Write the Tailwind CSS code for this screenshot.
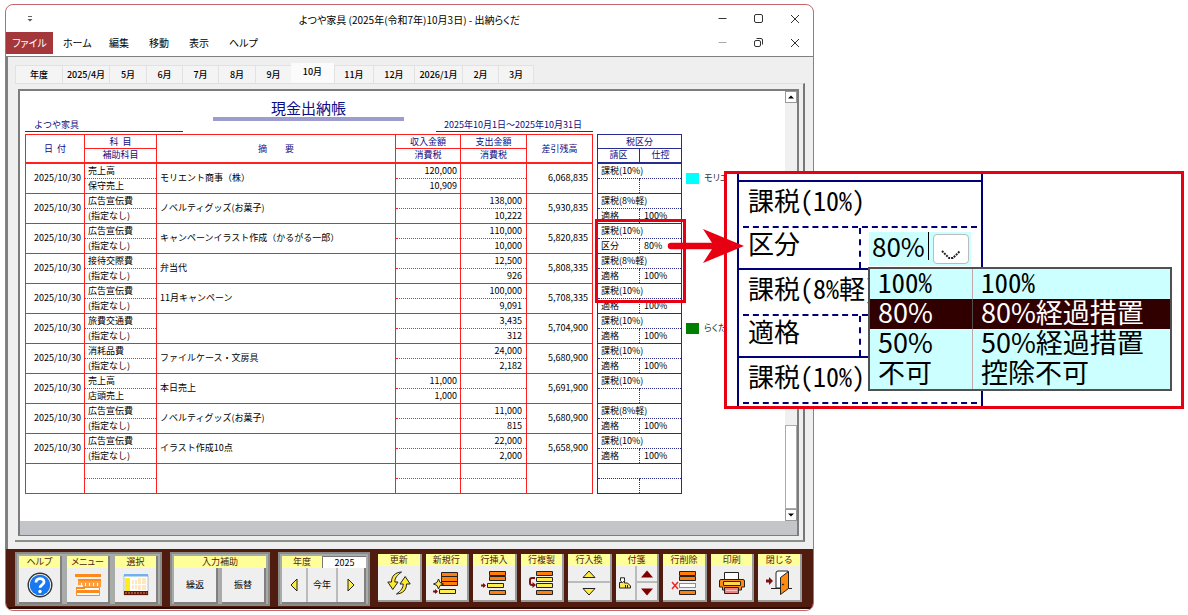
<!DOCTYPE html>
<html lang="ja">

<head>
	<meta charset="UTF-8">
	<meta name="viewport" content="width=device-width, initial-scale=1.0">
	<title>よつや家具 - 出納らくだ</title>
	<script src="https://cdn.jsdelivr.net/npm/@tailwindcss/browser@4"></script>
</head>

<body class="bg-white font-['Noto_Sans_CJK_JP',sans-serif] text-black">
	<main class="relative pl-[5px] pt-1">

		<!-- Application window -->
		<section class="flex w-full max-w-[809px] flex-col overflow-hidden rounded-lg border border-[#c4686c] bg-white">

			<!-- Title bar -->
			<header class="grid h-[27px] grid-cols-[1fr_auto_1fr] items-center">
				<svg class="ml-5 h-2 w-2" viewBox="0 0 8 8"><path d="M2 1.5h4" stroke="#666"/><path d="M1.5 4h5L4 6.500z" fill="#555"/></svg>
				<h1 class="pt-[3px] text-[10px] leading-4 [font-feature-settings:'palt']">よつや家具 (2025年(令和7年)10月3日) - 出納らくだ</h1>
				<div class="flex justify-end gap-5 pr-[10px]">
					<button aria-label="最小化" class="h-4 w-4"><svg viewBox="0 0 16 16" fill="none" stroke="#333"><path d="M3.500 7.500h8"/></svg></button>
					<button aria-label="最大化" class="h-4 w-4"><svg viewBox="0 0 16 16" fill="none" stroke="#333"><rect x="3.500" y="3.500" width="8" height="8" rx="1.500"/></svg></button>
					<button aria-label="閉じる" class="h-4 w-4"><svg viewBox="0 0 16 16" fill="none" stroke="#333"><path d="M4 4l8 8M12 4l-8 8"/></svg></button>
				</div>
			</header>

			<!-- Menu bar -->
			<nav class="flex h-6 items-start text-[10px] leading-[22px] [font-feature-settings:'palt']">
				<button class="h-[22px] w-[47px] bg-[#a4373a] text-white">ファイル</button>
				<button class="ml-[10px] w-[26px] whitespace-nowrap">ホーム</button>
				<button class="ml-5 w-5 whitespace-nowrap">編集</button>
				<button class="ml-5 w-5 whitespace-nowrap">移動</button>
				<button class="ml-5 w-5 whitespace-nowrap">表示</button>
				<button class="ml-5 w-[26px] whitespace-nowrap">ヘルプ</button>
				<div class="ml-auto flex gap-5 pr-[10px] pt-[3px]">
					<button aria-label="ブックを最小化" class="h-4 w-4"><svg viewBox="0 0 16 16" fill="none" stroke="#aaa"><path d="M3.500 7.500h8"/></svg></button>
					<button aria-label="元に戻す" class="h-4 w-4"><svg viewBox="0 0 16 16" fill="none" stroke="#333"><rect x="3.500" y="5.500" width="6" height="6" rx="1.500"/><path d="M5.500 3.500h4.500q1.500 0 1.500 1.500v4.500"/></svg></button>
					<button aria-label="ブックを閉じる" class="h-4 w-4"><svg viewBox="0 0 16 16" fill="none" stroke="#333"><path d="M4 4l8 8M12 4l-8 8"/></svg></button>
				</div>
			</nav>

			<!-- Client area -->
			<div class="flex h-[493px] flex-col border-l-2 border-t border-[#808080] bg-[#efefef] pl-[7px] pr-2 pt-[6px]">
				<div role="tablist" class="flex h-5 items-end text-[9px] font-medium leading-[18px] [&>button]:h-[18px] [&>button]:border-l [&>button]:border-t [&>button]:border-[#e2e2e2] [&>button]:bg-[#f4f4f4]">
					<button role="tab" class="w-[47px]">年度</button>
					<button role="tab" class="w-[47px] whitespace-nowrap">2025/4月</button>
					<button role="tab" class="w-[37px]">5月</button>
					<button role="tab" class="w-9">6月</button>
					<button role="tab" class="w-9">7月</button>
					<button role="tab" class="w-[37px]">8月</button>
					<button role="tab" class="w-9">9月</button>
					<span role="tab" aria-selected="true" class="h-5 w-[43px] bg-[#fbfbfb] text-center">10月</span>
					<button role="tab" class="w-[39px]">11月</button>
					<button role="tab" class="w-[41px]">12月</button>
					<button role="tab" class="w-12 whitespace-nowrap">2026/1月</button>
					<button role="tab" class="w-9">2月</button>
					<button role="tab" class="w-9 border-r">3月</button>
				</div>

				<div class="mb-[7px] flex grow flex-col border-b-2 border-r-2 border-t border-b-[#8a8f8a] border-r-[#777] border-t-[#e0e0e0] pb-1 pl-[3px] pr-1 pt-[5px]">
					<div class="flex grow flex-col border-2 border-b border-[#7d7d7d] bg-white">
						<div class="flex grow">

							<!-- Cash book sheet -->
							<div class="min-w-0 grow overflow-hidden pl-[5px] pt-[6px]">
								<div class="grid h-[35px] w-[568px] grid-cols-[158px_30px_191px_32px_157px] items-end text-[#0c0c84]">
									<p class="border-b border-[#2a2a94] pl-[9px] text-[9px] leading-3">よつや家具</p>
									<h2 class="col-start-3 mb-[11px] border-b-4 border-[#9c9ccf] text-center text-[15px] leading-[18px]">現金出納帳</h2>
									<p class="col-start-5 whitespace-nowrap border-b border-[#2a2a94] pl-2 text-[9px] leading-3">2025年10月1日～2025年10月31日</p>
								</div>

								<div class="flex gap-1 pt-[2px]">
									<table class="w-[568px] table-fixed border-collapse text-[9px] leading-[14px] [&_td]:border-[#ff2020] [&_th]:border-[#ff2020]">
										<colgroup>
											<col class="w-[59px]"><col class="w-[72px]"><col><col class="w-[65px]"><col class="w-[66px]"><col class="w-[66px]">
										</colgroup>
										<thead class="text-[#0c0c84] [&_th]:border [&_th]:p-0 [&_th]:font-normal">
											<tr class="h-[13px] leading-[13px]">
												<th rowspan="2" class="border-b-2!">日&nbsp; 付</th>
												<th>科&nbsp; 目</th>
												<th rowspan="2" class="border-b-2!">摘　　要</th>
												<th>収入金額</th>
												<th>支出金額</th>
												<th rowspan="2" class="border-b-2!">差引残高</th>
											</tr>
											<tr class="h-[14px] leading-3">
												<th class="border-b-2!">補助科目</th>
												<th class="border-b-2!">消費税</th>
												<th class="border-b-2!">消費税</th>
											</tr>
										</thead>
										<tbody id="ledger"></tbody>
									</table>

									<table class="w-[85px] table-fixed border-collapse text-[9px] leading-[14px] [&_td]:border-[#2a2a94] [&_th]:border-[#2a2a94]">
										<colgroup>
											<col class="w-[42px]"><col>
										</colgroup>
										<thead class="text-[#0c0c84] [&_th]:border [&_th]:p-0 [&_th]:font-normal">
											<tr class="h-[13px] leading-[13px]">
												<th colspan="2">税区分</th>
											</tr>
											<tr class="h-[14px] leading-3">
												<th class="border-b-2!">請区</th>
												<th class="border-b-2!">仕控</th>
											</tr>
										</thead>
										<tbody id="taxes"></tbody>
									</table>

									<ul class="grid auto-rows-[30px] content-start items-center pt-[29px] text-[9px] text-[#333] [font-feature-settings:'palt']">
										<li class="row-start-1 flex items-center gap-[5px] whitespace-nowrap"><span class="h-[11px] w-[13px] bg-[#00ffff]"></span>モリエント</li>
										<li class="row-start-6 flex items-center gap-[5px] whitespace-nowrap"><span class="h-[11px] w-[13px] bg-[#008000]"></span>らくだ</li>
									</ul>
								</div>
							</div>

							<!-- Vertical scroll bar -->
							<div class="flex w-3 flex-none flex-col bg-[#f0f0f0]">
								<button aria-label="上へ" class="h-3 border border-[#999] bg-white"><svg viewBox="0 0 10 10"><path d="M2 6.500h6L5 3.500z"/></svg></button>
								<div class="mt-auto h-[84px] border border-[#aaa] bg-white"></div>
								<button aria-label="下へ" class="h-3 border border-[#999] bg-white"><svg viewBox="0 0 10 10"><path d="M2 3.500h6L5 6.500z"/></svg></button>
							</div>
						</div>
						<div class="h-[14px] bg-[#c4c5c8]"></div>
					</div>
				</div>
			</div>

			<!-- Tool buttons -->
			<footer class="flex h-[60px] items-start gap-2 border-b-2 border-[#2c0c06] bg-[#501c10] pl-[9px] pt-[3px] text-[9px] text-[#501c10]">
				<div class="flex h-[54px] gap-[5px] border-2 border-[#8a8c8a] bg-[#a9aba9] p-[2px]">
					<button class="flex h-12 w-[43px] flex-col border-b-2 border-r-2 border-[#808080] bg-[#efefef]">
						<span class="h-3 w-full bg-[#ffff99] leading-3 [font-feature-settings:'palt']">ヘルプ</span>
						<svg class="m-auto h-[26px] w-[26px]" viewBox="0 0 26 26"><circle cx="13" cy="13" r="11.800" fill="#fff" stroke="#333" stroke-width="1.400"/><circle cx="13" cy="13" r="10.300" fill="#1878f0"/><path d="M9 10.500c0-5 8-5 8-.5 0 3-4 2.700-4 5.800" fill="none" stroke="#fff" stroke-width="2.800"/><circle cx="13" cy="19.500" r="1.700" fill="#fff"/></svg>
					</button>
					<button class="flex h-12 w-[43px] flex-col border-b-2 border-r-2 border-[#808080] bg-[#efefef]">
						<span class="h-3 w-full bg-[#ffff99] leading-3 [font-feature-settings:'palt']">メニュー</span>
						<svg class="m-auto h-[24px] w-[26px]" viewBox="0 0 26 24"><path fill="#ff8a1c" d="M0 1h26v3H0zM3 6h23v3H3z"/><path fill="#ffa040" d="M3 8h23v6H8v-2H3z"/><path stroke="#fff" d="M6.500 10v3M10.500 10v3M14.500 10v3M18.500 10v3M22.500 10v3"/><path fill="#fff" stroke="#ff8a1c" d="M1.500 14.500h23v3h-23zM1.500 19.500h23v3h-23z"/><path stroke="#ff8a1c" stroke-width="2" d="M1 15h9M1 19h24"/></svg>
					</button>
					<button class="flex h-12 w-[43px] flex-col border-b-2 border-r-2 border-[#808080] bg-[#efefef]">
						<span class="h-3 w-full bg-[#ffff99] leading-3">選択</span>
						<svg class="m-auto h-[22px] w-[26px]" viewBox="0 0 26 22"><path fill="#fff" stroke="#bbb" d="M1 1h24v20H1z"/><path fill="#70b0f0" d="M1 0h24v2.500H1z"/><path fill="#ffec20" d="M2 4h5v13H2z"/><path fill="#ffe8c0" d="M9 6h5v9H9zM15 4h8v12h-8z"/><path stroke="#fff" d="M9 10.500h14M18.500 4v12M11.500 6v9"/><path fill="#601808" d="M1 17h24v4H1z"/><path stroke="#d09070" stroke-dasharray="2 1" d="M2 19h22"/></svg>
					</button>
				</div>

				<div class="h-[54px] border-2 border-[#8a8c8a] bg-[#a9aba9] p-[2px]">
					<p class="h-3 bg-[#ffff99] text-center leading-3">入力補助</p>
					<div class="flex gap-1 text-[9px] text-black">
						<button class="h-9 w-11 border-b-2 border-r-2 border-[#808080] bg-[#efefef]">繰返</button>
						<button class="h-9 w-11 border-b-2 border-r-2 border-[#808080] bg-[#efefef]">振替</button>
					</div>
				</div>

				<div class="h-[54px] w-[92px] border-2 border-[#8a8c8a] bg-[#a9aba9] p-[2px]">
					<div class="flex h-3 leading-3">
						<label for="year" class="w-10 bg-[#ffff99] text-center">年度</label>
						<input id="year" value="2025" class="w-11 border-l border-t border-[#777] bg-white text-center leading-[11px] text-black">
					</div>
					<div class="flex border-b-2 border-r-2 border-[#808080] text-black">
						<button aria-label="前年" class="flex h-[34px] w-[26px] items-center justify-center border-r-2 border-[#bbb] bg-[#efefef]"><svg class="h-[14px] w-2" viewBox="0 0 8 14"><path d="M7 1v12L1 7z" fill="#ffee40" stroke="#222"/></svg></button>
						<button class="h-[34px] w-[30px] border-r-2 border-[#bbb] bg-[#efefef]">今年</button>
						<button aria-label="翌年" class="flex h-[34px] grow items-center justify-center bg-[#efefef]"><svg class="h-[14px] w-2" viewBox="0 0 8 14"><path d="M1 1v12l6-6z" fill="#ffee40" stroke="#222"/></svg></button>
					</div>
				</div>

				<div class="grid w-[424px] grid-cols-9 gap-1 pt-[2px]">
					<button class="flex h-12 flex-col border-b-2 border-r-2 border-[#9a9a9a] bg-[#efefef]">
						<span class="h-3 w-full bg-[#ffff99] leading-3">更新</span>
						<svg class="m-auto h-6 w-6" viewBox="0 0 24 24" fill="#ffe830" stroke="#222" stroke-width="1"><path d="M14.500 1C8 1.500 4.500 5 4.500 11H.8l5 7.500L11 11H7.800c0-4 2-6.500 6.700-10z"/><path d="M9.500 23c6.500-.5 10-4 10-10h3.700l-5-7.500L13 13h3.200c0 4-2 6.500-6.700 10z"/></svg>
					</button>
					<button class="flex h-12 flex-col border-b-2 border-r-2 border-[#9a9a9a] bg-[#efefef]">
						<span class="h-3 w-full bg-[#ffff99] leading-3">新規行</span>
						<svg class="m-auto h-6 w-[26px]" viewBox="0 0 26 24" stroke="#222"><path fill="#ff7e0c" d="M8.500 1.500h16v4h-16zM8.500 5.500h16v5h-16zM8.500 10.500h16v4h-16z"/><path fill="#ffee50" d="M6.500 18.500h16v4h-16zM5.500 8l1.500 3.500 3.500 1.500L7 14.500 5.500 18 4 14.500.5 13 4 11.500z"/><path stroke="#801010" stroke-width="2" d="M0 20.500h4"/><path fill="#801010" stroke="none" d="M2 18v5l3-2.500z"/></svg>
					</button>
					<button class="flex h-12 flex-col border-b-2 border-r-2 border-[#9a9a9a] bg-[#efefef]">
						<span class="h-3 w-full bg-[#ffff99] leading-3">行挿入</span>
						<svg class="m-auto h-[26px] w-[26px]" viewBox="0 0 26 26" stroke="#222"><path fill="#ff7e0c" d="M8.500 1.500h16v4h-16zM8.500 6.500h16v4h-16zM8.500 20.500h16v4h-16z"/><path fill="#ffee50" d="M6.500 13.500h16v4h-16z"/><path stroke="#801010" stroke-width="2" d="M0 15.500h4"/><path fill="#801010" stroke="none" d="M2 13v5l3-2.500z"/></svg>
					</button>
					<button class="flex h-12 flex-col border-b-2 border-r-2 border-[#9a9a9a] bg-[#efefef]">
						<span class="h-3 w-full bg-[#ffff99] leading-3">行複製</span>
						<svg class="m-auto h-[26px] w-[26px]" viewBox="0 0 26 26" stroke="#222"><path fill="#ff7e0c" d="M8.500 1.500h16v4h-16zM8.500 20.500h16v4h-16z"/><path fill="#ffee50" d="M8.500 7.500h16v4h-16zM8.500 13.500h16v4h-16z"/><path fill="none" stroke="#801010" stroke-width="2" d="M7 8H4Q2 8 2 10v3q0 2 2 2h2"/><path fill="#801010" stroke="none" d="M4.500 12v6l3.500-3z"/></svg>
					</button>
					<div class="flex h-12 flex-col border-b-2 border-r-2 border-[#9a9a9a] bg-[#efefef]">
						<span class="h-3 w-full bg-[#ffff99] text-center leading-3">行入換</span>
						<button aria-label="上の行と入換" class="flex h-[17px] items-center justify-center border-b-2 border-[#bbb]"><svg class="h-2 w-[14px]" viewBox="0 0 14 8"><path d="M1 7.500h12L7 1z" fill="#ffee40" stroke="#222"/></svg></button>
						<button aria-label="下の行と入換" class="flex h-[17px] items-center justify-center"><svg class="h-2 w-[14px]" viewBox="0 0 14 8"><path d="M1 .5h12L7 7z" fill="#ffee40" stroke="#222"/></svg></button>
					</div>
					<div class="grid h-12 grid-cols-[21px_1fr] grid-rows-[12px_17px_17px] border-b-2 border-r-2 border-[#9a9a9a] bg-[#efefef]">
						<span class="col-span-2 bg-[#ffff99] text-center leading-3">付箋</span>
						<button aria-label="付箋を付ける" class="row-span-2 flex items-center justify-center border-r-2 border-[#bbb]"><svg class="h-3 w-[14px]" viewBox="0 0 14 12"><path d="M1.500 11V5.500h2V4h3v2h3l3 3v2z" fill="#ffe850" stroke="#222"/><path d="M2.500.8h4v3l-2 2-2-2z" fill="#fff" stroke="#222"/><path d="M7.500 8v3M9.500 8v3" stroke="#222"/></svg></button>
						<button aria-label="前の付箋" class="flex items-center justify-center border-b-2 border-[#bbb]"><svg class="h-2 w-3" viewBox="0 0 12 8"><path d="M0 7.500h12L6 .5z" fill="#800000"/></svg></button>
						<button aria-label="次の付箋" class="flex items-center justify-center"><svg class="h-2 w-3" viewBox="0 0 12 8"><path d="M0 .5h12L6 7.500z" fill="#800000"/></svg></button>
					</div>
					<button class="flex h-12 flex-col border-b-2 border-r-2 border-[#9a9a9a] bg-[#efefef]">
						<span class="h-3 w-full bg-[#ffff99] leading-3">行削除</span>
						<svg class="m-auto h-[26px] w-[26px]" viewBox="0 0 26 26" stroke="#222"><path fill="#ff7e0c" d="M8.500 1.500h16v4h-16zM8.500 6.500h16v4h-16zM8.500 20.500h16v4h-16z"/><path fill="#fff" stroke-dasharray="1 1" d="M8.500 13.500h16v4h-16z"/><path stroke="#f02020" stroke-width="1.400" d="M1 12l6 7M7 12l-6 7"/></svg>
					</button>
					<button class="flex h-12 flex-col border-b-2 border-r-2 border-[#9a9a9a] bg-[#efefef]">
						<span class="h-3 w-full bg-[#ffff99] leading-3">印刷</span>
						<svg class="m-auto h-6 w-[26px]" viewBox="0 0 26 24" stroke="#222"><path fill="#fff" d="M5.500 9.500v-8h14v8z"/><path fill="#ff8a10" d="M.5 10q0-1.500 1.500-1.500h22q1.500 0 1.500 1.500v6h-3v3h-19v-3h-3z"/><path fill="#ffd850" d="M4.500 10.500h17v4h-17z"/><path fill="#f08080" d="M5.500 16.500h14v6h-14z"/><path stroke="#ffc0c0" d="M7 19.500h11"/></svg>
					</button>
					<button class="flex h-12 flex-col border-b-2 border-r-2 border-[#9a9a9a] bg-[#efefef]">
						<span class="h-3 w-full bg-[#ffff99] leading-3">閉じる</span>
						<svg class="m-auto h-[26px] w-[26px]" viewBox="0 0 26 26" stroke="#222"><path fill="#fff" d="M10 18V3q0-2 2-2h10v17z"/><path d="M5 18.500h21"/><path fill="#ff8a10" d="M14.500 7.500l8-6v17l-8 6z"/><circle cx="17" cy="14.500" r=".6" fill="#222"/><path stroke="#801010" stroke-width="3" d="M0 11h4"/><path fill="#801010" stroke="none" d="M3 7v8l4-4z"/></svg>
					</button>
				</div>
			</footer>
			<div class="h-px"></div>
		</section>

		<!-- Enlarged detail of the tax columns -->
		<div class="absolute left-[595px] top-[219px] h-[84px] w-[91px] border-3 border-[#e60012]"></div>

		<section class="absolute left-[724px] top-[171px] h-[238px] w-[460px] border-3 border-[#e60012] bg-white pl-[10px] text-[26px] leading-[30px] [font-feature-settings:'hwid']">
			<div class="flex h-full w-[246px] flex-col overflow-hidden border-x-2 border-[#000078]">
				<div class="h-2 flex-none border-b-2 border-[#000078]"></div>
				<div class="mx-1 h-[46px] flex-none border-b-2 border-dashed border-[#000078] pl-[5px] pt-[3px]">課税(10%)</div>
				<div class="flex h-[42px] flex-none border-b-2 border-[#000078]">
					<div class="w-[122px] border-r-2 border-dashed border-[#000078] pl-[9px]">区分</div>
					<div class="ml-2 mt-1 flex h-[34px] w-[102px] items-start bg-[#ccffff]">
						<input aria-label="仕控" value="80%" class="h-7 w-[60px] border-r border-black pl-[3px] [font-feature-settings:normal]">
						<button aria-label="一覧を開く" class="ml-1 mt-[2px] h-[30px] w-9 rounded-sm border border-[#bbb] bg-white"><svg class="mx-auto mt-3" width="20" height="12" viewBox="0 0 20 12"><path d="M1 2l7 7h4l7-7" fill="none" stroke="#222" stroke-width="2" stroke-dasharray="2 1"/></svg></button>
					</div>
				</div>
				<div class="mx-1 h-[46px] flex-none whitespace-nowrap border-b-2 border-dashed border-[#000078] pl-[5px] pt-[3px]">課税(8%軽)</div>
				<div class="h-[42px] flex-none border-b-2 border-[#000078]">
					<div class="h-full w-[122px] border-r-2 border-dashed border-[#000078] pl-[9px]">適格</div>
				</div>
				<div class="mx-1 h-[46px] flex-none border-b-2 border-dashed border-[#000078] pl-[5px] pt-[3px]">課税(10%)</div>
			</div>

			<ul role="listbox" aria-label="仕控" class="absolute left-[141px] top-[93px] w-[304px] border-2 border-[#505050] bg-[#ccffff] text-[27px] leading-[26px] [&>li]:grid [&>li]:h-[30px] [&>li]:grid-cols-[103px_1fr] [&>li>span]:pl-2 [&>li>span]:whitespace-nowrap">
				<li role="option"><span class="border-r border-[#c0a8a8]">100%</span><span>100%</span></li>
				<li role="option" aria-selected="true" class="bg-[#300000] text-white [font-feature-settings:normal]"><span class="border-r border-[#505050]">80%</span><span>80%経過措置</span></li>
				<li role="option" class="[font-feature-settings:normal]"><span class="border-r border-[#c0a8a8]">50%</span><span>50%経過措置</span></li>
				<li role="option"><span class="border-r border-[#c0a8a8]">不可</span><span>控除不可</span></li>
			</ul>
		</section>

		<svg class="absolute left-[664px] top-[228px]" width="80" height="36" viewBox="0 0 80 36"><path d="M7 18h48" stroke="#e60012" stroke-width="6.500" stroke-linecap="round"/><path d="M39 1l41 17-41 17 11-17z" fill="#e60012"/></svg>
	</main>

	<script>
		// account, sub account, summary, income, income tax, expense, expense tax, balance, tax class, invoice, credit
		const entries = [
			['売上高', '保守売上', 'モリエント商事（株）', '120,000', '10,909', '', '', '6,068,835', '課税(10%)', '', ''],
			['広告宣伝費', '(指定なし)', 'ノベルティグッズ(お菓子)', '', '', '138,000', '10,222', '5,930,835', '課税(8%軽)', '適格', '100%'],
			['広告宣伝費', '(指定なし)', 'キャンペーンイラスト作成（かるがる一郎）', '', '', '110,000', '10,000', '5,820,835', '課税(10%)', '区分', '80%'],
			['接待交際費', '(指定なし)', '弁当代', '', '', '12,500', '926', '5,808,335', '課税(8%軽)', '適格', '100%'],
			['広告宣伝費', '(指定なし)', '11月キャンペーン', '', '', '100,000', '9,091', '5,708,335', '課税(10%)', '適格', '100%'],
			['旅費交通費', '(指定なし)', '', '', '', '3,435', '312', '5,704,900', '課税(10%)', '適格', '100%'],
			['消耗品費', '(指定なし)', 'ファイルケース・文房具', '', '', '24,000', '2,182', '5,680,900', '課税(10%)', '適格', '100%'],
			['売上高', '店頭売上', '本日売上', '11,000', '1,000', '', '', '5,691,900', '課税(10%)', '', ''],
			['広告宣伝費', '(指定なし)', 'ノベルティグッズ(お菓子)', '', '', '11,000', '815', '5,680,900', '課税(8%軽)', '適格', '100%'],
			['広告宣伝費', '(指定なし)', 'イラスト作成10点', '', '', '22,000', '2,000', '5,658,900', '課税(10%)', '適格', '100%'],
			['', '', '', '', '', '', '', '', '', '', ''],
		];

		const full = 'border p-0';
		const upper = 'border-x border-b [border-bottom-style:dotted] p-0';
		const lower = 'border-x border-b p-0';

		document.getElementById('ledger').innerHTML = entries.map(e => `
			<tr class="h-[15px]">
				<td rowspan="2" class="${full} pr-[3px]! text-right">${e[0] ? '2025/10/30' : ''}</td>
				<td class="${upper} pl-[3px]!">${e[0]}</td>
				<td rowspan="2" class="${full} pl-[3px]!">${e[2]}</td>
				<td class="${upper} pr-[3px]! text-right">${e[3]}</td>
				<td class="${upper} pr-1! text-right">${e[5]}</td>
				<td rowspan="2" class="${full} pr-1! text-right">${e[7]}</td>
			</tr>
			<tr class="h-[15px]">
				<td class="${lower} pl-[3px]!">${e[1]}</td>
				<td class="${lower} pr-[3px]! text-right">${e[4]}</td>
				<td class="${lower} pr-1! text-right">${e[6]}</td>
			</tr>`).join('');

		document.getElementById('taxes').innerHTML = entries.map(e => `
			<tr class="h-[15px]">
				<td colspan="2" class="border-x border-b [border-bottom-style:dotted] p-0 pl-[3px]">${e[8]}</td>
			</tr>
			<tr class="h-[15px]">
				<td class="border-x border-b [border-right-style:dotted] p-0 pl-[3px]">${e[9]}</td>
				<td class="border-b border-r p-0 pl-1">${e[10]}</td>
			</tr>`).join('');
	</script>
</body>

</html>
